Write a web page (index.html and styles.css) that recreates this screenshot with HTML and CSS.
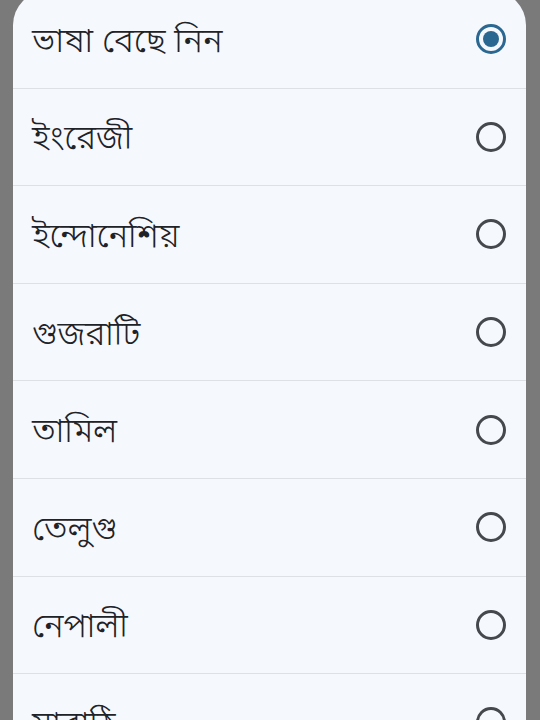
FILE: index.html
```html
<!DOCTYPE html>
<html lang="bn">
<head>
<meta charset="utf-8">
<link rel="stylesheet" href="styles.css">
</head>
<body>
<div class="sheet">
  <ul class="list">
    <li class="row"><span class="label">ভাষা বেছে নিন</span><span class="radio checked"></span></li>
    <li class="row"><span class="label">ইংরেজী</span><span class="radio"></span></li>
    <li class="row"><span class="label">ইন্দোনেশিয়</span><span class="radio"></span></li>
    <li class="row"><span class="label">গুজরাটি</span><span class="radio"></span></li>
    <li class="row"><span class="label">তামিল</span><span class="radio"></span></li>
    <li class="row"><span class="label">তেলুগু</span><span class="radio"></span></li>
    <li class="row"><span class="label">নেপালী</span><span class="radio"></span></li>
    <li class="row"><span class="label">মারাঠি</span><span class="radio"></span></li>
  </ul>
</div>
</body>
</html>
```
FILE: styles.css
```css
html, body {
  margin: 0;
  padding: 0;
  background: #7a7a7a;
  height: 720px;
  overflow: hidden;
}
body {
  font-family: "Noto Sans Bengali", "Noto Sans", "Lohit Bengali", "FreeSans", sans-serif;
}
.sheet {
  margin: -9px 14px 0 13px;
  background: #f5f8fd;
  border-radius: 34px 34px 0 0;
  height: 900px;
}
.list {
  list-style: none;
  margin: 0;
  padding: 0;
}
.row {
  display: flex;
  align-items: center;
  justify-content: space-between;
  padding: 0 20px 0 19px;
  border-bottom: 1.5px solid #dde1e6;
  box-sizing: border-box;
  height: 97.6px;
}
.label {
  font-size: 34px;
  font-weight: 300;
  color: #1f2226;
  position: relative;
  top: 4px;
}
.radio {
  width: 30px;
  height: 30px;
  box-sizing: border-box;
  border: 3px solid #45484c;
  border-radius: 50%;
  position: relative;
}
.radio.checked {
  border-color: #2a6791;
}
.radio.checked::after {
  content: "";
  position: absolute;
  left: 4px;
  top: 4px;
  width: 16px;
  height: 16px;
  border-radius: 50%;
  background: #2a6791;
}
```
